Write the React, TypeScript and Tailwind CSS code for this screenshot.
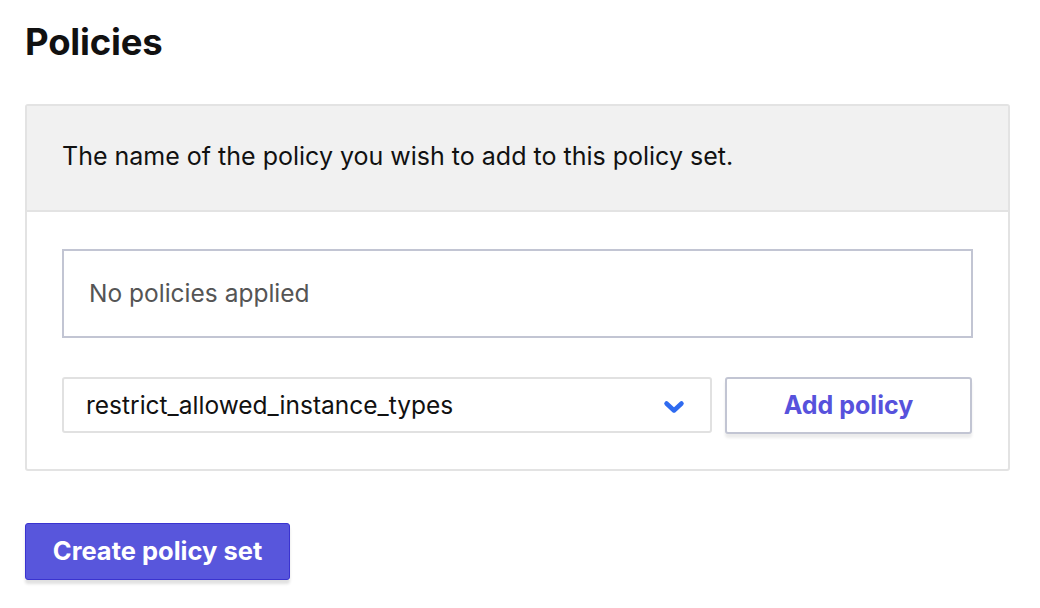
import React, { useState } from "react";

const options = [
  "restrict_allowed_instance_types",
  "require_tags",
  "limit_proposed_monthly_cost",
];

export default function App() {
  const [selected, setSelected] = useState(options[0]);
  const [applied, setApplied] = useState<string[]>([]);

  const addPolicy = () => {
    if (!applied.includes(selected)) setApplied([...applied, selected]);
  };

  return (
    <div
      className="w-[1040px] h-[608px] bg-white px-[25px] pt-[20px] text-[#111]"
      style={{ fontFamily: "Inter, 'Liberation Sans', sans-serif" }}
    >
      <h1 className="text-[36.5px] font-bold leading-[44px] tracking-[-0.2px]">Policies</h1>

      <div className="mt-[40px] w-[985px] rounded-[3px] border-2 border-[#e3e3e3]">
        <div className="flex h-[106px] items-center border-b-2 border-[#e3e3e3] bg-[#f1f1f1] px-[35px] pb-[2px] text-[25px]">
          The name of the policy you wish to add to this policy set.
        </div>

        <div className="px-[35px] pt-[37px] pb-[35px]">
          <div className="flex h-[89px] items-center border-2 border-[#c2c5d3] px-[25px] text-[24.5px] text-[#555]">
            {applied.length === 0 ? "No policies applied" : applied.join(", ")}
          </div>

          <div className="mt-[39px] flex gap-[13px]">
            <div className="relative flex h-[56px] w-[650px] items-center rounded-[3px] border-2 border-[#e1e1e1] px-[22px] text-[24.5px]">
              <span>{selected}</span>
              <svg
                className="absolute right-[25px] top-[21px]"
                width="22"
                height="14"
                viewBox="0 0 22 14"
                fill="none"
              >
                <path
                  d="M3.5 3.5 L11 10.5 L18.5 3.5"
                  stroke="#2f6bf0"
                  strokeWidth="4.5"
                  strokeLinecap="round"
                  strokeLinejoin="round"
                />
              </svg>
              <select
                value={selected}
                onChange={(e) => setSelected(e.target.value)}
                className="absolute inset-0 opacity-0"
              >
                {options.map((o) => (
                  <option key={o}>{o}</option>
                ))}
              </select>
            </div>
            <button
              onClick={addPolicy}
              className="h-[57px] w-[247px] rounded-[3px] border-2 border-[#c2c5d3] bg-white text-[25px] font-bold text-[#5752dc] shadow-[0_4px_3px_rgba(0,0,0,0.08)]"
            >
              Add policy
            </button>
          </div>
        </div>
      </div>

      <button className="mt-[52px] h-[57px] w-[265px] rounded-[3px] border border-[#3a33d0] bg-[#5856dc] text-[25.5px] font-bold text-white shadow-[0_4px_3px_rgba(0,0,0,0.12)]">
        Create policy set
      </button>
    </div>
  );
}
